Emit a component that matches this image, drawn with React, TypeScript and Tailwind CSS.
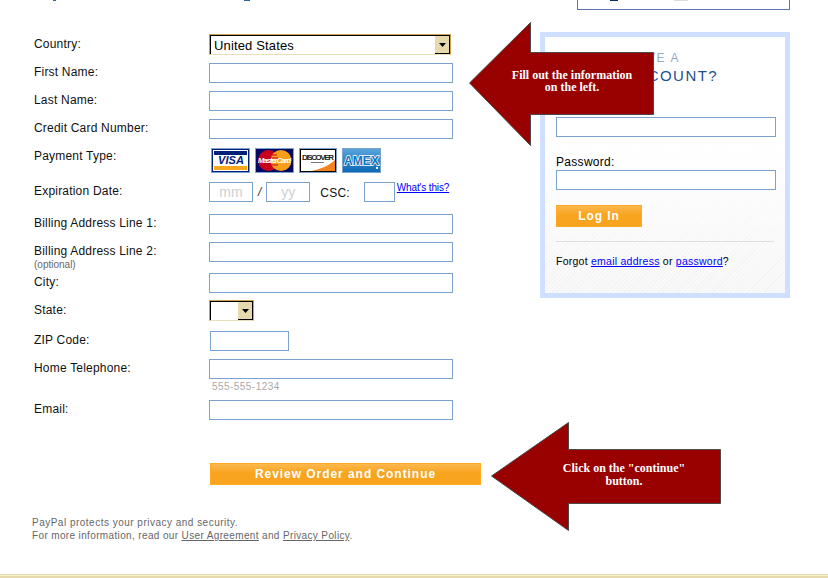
import type { ReactNode } from 'react'

const inputCls = 'block h-5 border border-[#7ba2cc] bg-white outline-none'

function Row({ label, sub, className, labelClass = 'pt-[2px]', children }: { label: string; sub?: string; className: string; labelClass?: string; children: ReactNode }) {
  return (
    <div className={`flex ${className}`}>
      <div className={`w-[175px] shrink-0 ${labelClass}`}>
        <p className="text-[12px] leading-[14px] tracking-[0.2px] text-[#111]">{label}</p>
        {sub && <p className="text-[10px] leading-[12px] text-[#666] mt-[1px]">{sub}</p>}
      </div>
      {children}
    </div>
  )
}

function FakeSelect({ value, className }: { value?: string; className: string }) {
  return (
    <div className={`flex h-[21px] border border-[#c9a44c] border-b-[#eadfb8] border-r-[#c9a44c] ${className}`}>
      <div className="flex flex-1 border-t border-l border-black items-center pl-[3px] text-[13px] leading-none tracking-[0.15px] text-black bg-white min-w-0">{value}</div>
      <div className="w-[15px] shrink-0 bg-[#e6d9ae] border-t border-r border-b border-black flex items-center justify-center">
        <svg width="7" height="4" viewBox="0 0 7 4"><path d="M0 0h7L3.5 4z" fill="#000" /></svg>
      </div>
    </div>
  )
}

function OrangeButton({ label, className }: { label: string; className: string }) {
  return (
    <button className={`h-[22px] border border-[#ffa820] bg-[linear-gradient(#fbb94e,#f9a41f_45%,#f9a41f)] text-white font-bold text-[12px] tracking-[0.95px] leading-none ${className}`}>
      {label}
    </button>
  )
}

function VisaCard() {
  return (
    <svg width="39" height="25" viewBox="0 0 39 25">
      <rect x="0.5" y="0.5" width="38" height="24" fill="#fff" stroke="#7ba2cc" />
      <rect x="1.5" y="1.5" width="36" height="22" fill="none" stroke="#00207a" />
      <rect x="3" y="3" width="33" height="4" fill="#00207a" />
      <rect x="3" y="18" width="33" height="4" fill="#f7a81b" />
      <text x="7" y="16" textLength="26" fontFamily="Liberation Sans" fontSize="11" fontWeight="700" fontStyle="italic" fill="#00207a">VISA</text>
    </svg>
  )
}

function MasterCard() {
  return (
    <svg width="39" height="25" viewBox="0 0 39 25">
      <rect x="0.5" y="0.5" width="38" height="24" fill="#000a66" stroke="#7ba2cc" />
      <circle cx="13.5" cy="12.5" r="10.5" fill="#c9001c" />
      <circle cx="26" cy="12.5" r="10.5" fill="#f79e1b" />
      <path d="M17 7h5M16 10h7M16 17h7" stroke="#c9001c" strokeWidth="1" />
      <text x="3" y="15" textLength="33" fontFamily="Liberation Sans" fontSize="7.5" fontWeight="700" fontStyle="italic" fill="#fff">MasterCard</text>
    </svg>
  )
}

function DiscoverCard() {
  return (
    <svg width="38" height="25" viewBox="0 0 38 25">
      <rect x="0.5" y="0.5" width="37" height="24" fill="#fff" stroke="#7ba2cc" />
      <rect x="1.5" y="1.5" width="35" height="22" fill="#fff" stroke="#000" />
      <path d="M12 23C22 21 31 17 36 12v11z" fill="#f58220" />
      <text x="3" y="12" textLength="32" fontFamily="Liberation Sans" fontSize="8" fontWeight="700" fill="#222">DISCOVER</text>
      <rect x="12" y="14" width="13" height="1" fill="#777" />
    </svg>
  )
}

function AmexCard() {
  return (
    <svg width="39" height="25" viewBox="0 0 39 25">
      <defs>
        <linearGradient id="amexFill" x1="0" y1="0" x2="0" y2="1">
          <stop offset="0" stopColor="#5aa5dc" />
          <stop offset="1" stopColor="#0a68b4" />
        </linearGradient>
      </defs>
      <rect x="0.5" y="0.5" width="38" height="24" fill="url(#amexFill)" stroke="#7ba2cc" />
      <text x="2" y="16.5" textLength="35" fontFamily="Liberation Sans" fontSize="12" fontWeight="700" stroke="#fff" strokeWidth="1.4" paintOrder="stroke" fill="#1272bd">AMEX</text>
      <rect x="34" y="19" width="2" height="2" fill="#fff" />
    </svg>
  )
}

function Callout({ className, width, height, points, children, textClass }: { className: string; width: number; height: number; points: string; children: ReactNode; textClass: string }) {
  return (
    <div className={`absolute ${className}`}>
      <svg width={width} height={height} viewBox={`0 0 ${width} ${height}`} className="block">
        <polygon points={points} fill="#990000" stroke="#4a4a4a" strokeWidth="1" />
      </svg>
      <p className={`absolute text-center text-white font-bold text-[12px] font-['Liberation_Serif',serif] ${textClass}`}>
        {children}
      </p>
    </div>
  )
}

export default function App() {
  return (
    <div className="relative w-[828px] h-[578px] overflow-hidden bg-white flex flex-col font-['Liberation_Sans',Arial,sans-serif]">
      {/* Cut off header */}
      <div className="h-[10px] shrink-0 flex items-start">
        <div className="ml-[53px] w-[3px] h-px bg-[#2f5fa8]" />
        <div className="ml-[188px] w-[6px] h-px bg-[#2f5fa8]" />
        <div className="ml-auto mr-[38px] w-[213px] h-[10px] border border-t-0 border-[#5a76ad] flex items-start">
          <div className="ml-[32px] w-[8px] h-px bg-[#0b2a66]" />
          <div className="ml-[56px] w-[14px] h-px bg-[#dddddd]" />
        </div>
      </div>

      <div className="flex-1 flex min-h-0">
        {/* Form */}
        <div className="w-[540px] shrink-0 pl-[34px] pt-[24px]">
          <Row label="Country:" className="h-[29px]" labelClass="pt-[3px]">
            <FakeSelect value="United States" className="w-[242px]" />
          </Row>
          <Row label="First Name:" className="h-[28px]"><input className={`${inputCls} w-[244px]`} /></Row>
          <Row label="Last Name:" className="h-[28px]"><input className={`${inputCls} w-[244px]`} /></Row>
          <Row label="Credit Card Number:" className="h-[29px]"><input className={`${inputCls} w-[244px]`} /></Row>
          <Row label="Payment Type:" className="h-[34px]" labelClass="pt-px">
            <div className="flex gap-[5px] pl-[2px]">
              <VisaCard />
              <MasterCard />
              <DiscoverCard />
              <AmexCard />
            </div>
          </Row>
          <Row label="Expiration Date:" className="h-[32px]">
            <div className="flex items-start">
              <input placeholder="mm" className={`${inputCls} w-[44px] text-center text-[14px] placeholder:text-[#cfcfcf]`} />
              <span className="ml-[5px] mt-[3px] text-[12px] leading-[14px] italic text-[#333]">/</span>
              <input placeholder="yy" className={`${inputCls} ml-[5px] w-[44px] text-center text-[14px] placeholder:text-[#cfcfcf]`} />
              <span className="ml-[10px] mt-[4px] text-[12px] leading-[14px] tracking-[0.2px] text-[#111]">CSC:</span>
              <input className={`${inputCls} ml-[14px] w-[31px]`} />
              <a href="#" className="ml-[2px] -mt-[1px] text-[10px] leading-[14px] tracking-[-0.15px] text-[#0000ff] underline whitespace-nowrap">What's this?</a>
            </div>
          </Row>
          <Row label="Billing Address Line 1:" className="h-[28px]"><input className={`${inputCls} w-[244px]`} /></Row>
          <Row label="Billing Address Line 2:" sub="(optional)" className="h-[31px]"><input className={`${inputCls} w-[244px]`} /></Row>
          <Row label="City:" className="h-[27px]"><input className={`${inputCls} w-[244px]`} /></Row>
          <Row label="State:" className="h-[31px]" labelClass="pt-[3px]">
            <FakeSelect className="w-[45px]" />
          </Row>
          <Row label="ZIP Code:" className="h-[28px]"><input className={`${inputCls} ml-px w-[79px]`} /></Row>
          <Row label="Home Telephone:" className="h-[41px]">
            <div>
              <input className={`${inputCls} w-[244px]`} />
              <p className="pl-[3px] mt-[1px] text-[10px] leading-[14px] tracking-[0.45px] text-[#aaa]">555-555-1234</p>
            </div>
          </Row>
          <Row label="Email:" className="h-[61px]"><input className={`${inputCls} w-[244px]`} /></Row>

          <OrangeButton label="Review Order and Continue" className="ml-[176px] w-[271px]" />

          <div className="mt-[31px] -ml-[2px] text-[10px] leading-[13px] text-[#666]">
            <p className="tracking-[0.49px]">PayPal protects your privacy and security.</p>
            <p className="tracking-[0.36px]">
              For more information, read our <a href="#" className="underline">User Agreement</a> and <a href="#" className="underline">Privacy Policy</a>.
            </p>
          </div>
        </div>

        {/* Login panel */}
        <div className="w-[250px] h-[266px] mt-[22px] border-[5px] border-[#cfdfff] bg-[linear-gradient(#ffffff_40%,#ffffff00),repeating-linear-gradient(135deg,#f9f9f9_0,#f9f9f9_2px,#f3f3f3_2px,#f3f3f3_3px)] px-[11px] pt-[13px]">
          <p className="text-[12px] leading-[17px] tracking-[1.6px] text-[#8fa9d0] whitespace-nowrap">ALREADY HAVE A</p>
          <p className="text-[15px] leading-[17px] tracking-[1.45px] text-[#1f4f8f] whitespace-nowrap">PAYPAL ACCOUNT?</p>
          <label className="block mt-[17px] text-[12px] leading-[14px] text-black">Email:</label>
          <input className={`${inputCls} mt-[2px] w-[220px]`} />
          <label className="block mt-[18px] text-[12px] leading-[14px] tracking-[0.3px] text-black">Password:</label>
          <input className={`${inputCls} mt-px w-[220px]`} />
          <OrangeButton label="Log In" className="mt-[15px] w-[86px]" />
          <div className="mt-[14px] w-[218px] border-t border-[#ddd]" />
          <p className="mt-[12px] text-[10.5px] leading-[14px] tracking-[0.25px] text-black">
            Forgot <a href="#" className="text-[#0000ff] underline">email address</a> or <a href="#" className="text-[#0000ff] underline">password</a>?
          </p>
        </div>
      </div>

      {/* Bottom band */}
      <div className="h-[4px] shrink-0 border-t border-[#e6d9ae] bg-[linear-gradient(#f5eecf_1px,#e6d9ae_1px)]" />

      {/* Tutorial arrows */}
      <Callout
        className="left-[469px] top-[22px]"
        width={186}
        height={124}
        points="0.5,61 61.5,0.5 61.5,30.5 184.5,30.5 184.5,92.5 61.5,92.5 61.5,123.5"
        textClass="left-[34px] top-[47px] w-[138px] leading-[12px]"
      >
        Fill out the information<br />on the left.
      </Callout>
      <Callout
        className="left-[491px] top-[422px]"
        width={231}
        height={109}
        points="0.5,54 77.5,0.5 77.5,27.5 229.5,27.5 229.5,81.5 77.5,81.5 77.5,108.5"
        textClass="left-[62px] top-[40px] w-[142px] leading-[13px]"
      >
        Click on the "continue"<br />button.
      </Callout>
    </div>
  )
}
